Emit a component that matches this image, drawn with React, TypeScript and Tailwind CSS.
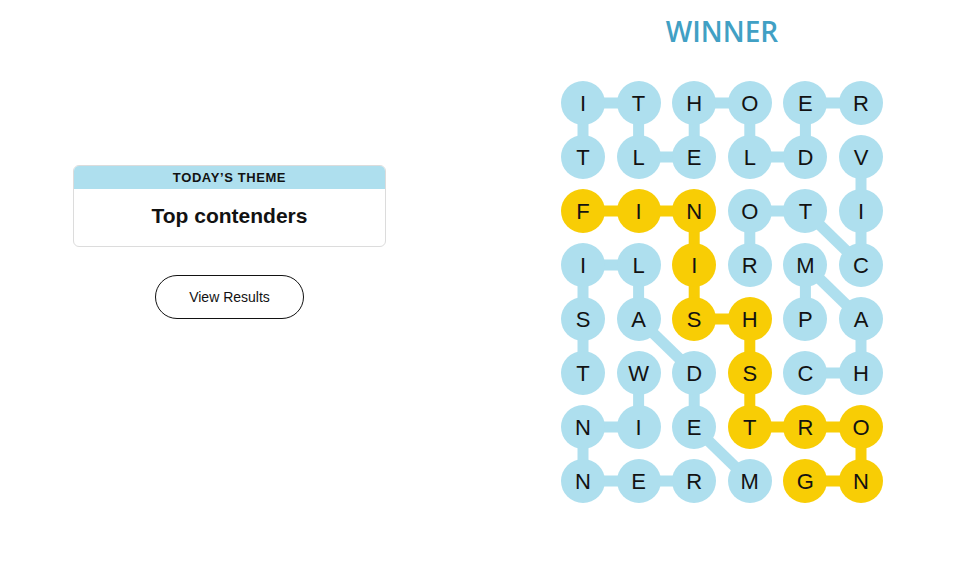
import React from 'react';

const GRID = [
  'ITHOER',
  'TLELDV',
  'FINOTI',
  'ILIRMC',
  'SASHPA',
  'TWDSCH',
  'NIETRO',
  'NERMGN',
];

// cells that belong to the spangram
const GOLD = new Set([
  '2,0', '2,1', '2,2', '3,2', '4,2', '4,3', '5,3', '6,3', '6,4', '6,5', '7,5', '7,4',
]);

type Link = [number, number, number, number, boolean?];

const LINKS: Link[] = [
  // TITLEHOLDER
  [1, 0, 0, 0], [0, 0, 0, 1], [0, 1, 1, 1], [1, 1, 1, 2], [1, 2, 0, 2], [0, 2, 0, 3],
  [0, 3, 1, 3], [1, 3, 1, 4], [1, 4, 0, 4], [0, 4, 0, 5],
  // VICTOR
  [1, 5, 2, 5], [2, 5, 3, 5], [3, 5, 2, 4], [2, 4, 2, 3], [2, 3, 3, 3],
  // CHAMP
  [5, 4, 5, 5], [5, 5, 4, 5], [4, 5, 3, 4], [3, 4, 4, 4],
  // MEDALIST
  [7, 3, 6, 2], [6, 2, 5, 2], [5, 2, 4, 1], [4, 1, 3, 1], [3, 1, 3, 0], [3, 0, 4, 0], [4, 0, 5, 0],
  // WINNER
  [5, 1, 6, 1], [6, 1, 6, 0], [6, 0, 7, 0], [7, 0, 7, 1], [7, 1, 7, 2],
  // FINISHSTRONG
  [2, 0, 2, 1, true], [2, 1, 2, 2, true], [2, 2, 3, 2, true], [3, 2, 4, 2, true],
  [4, 2, 4, 3, true], [4, 3, 5, 3, true], [5, 3, 6, 3, true], [6, 3, 6, 4, true],
  [6, 4, 6, 5, true], [6, 5, 7, 5, true], [7, 5, 7, 4, true],
];

const D = 44;
const PX = 55.6;
const PY = 54;
const cx = (c: number) => D / 2 + c * PX;
const cy = (r: number) => D / 2 + r * PY;

const Board: React.FC = () => (
  <div className="relative w-[322px] h-[422px]">
    <svg className="absolute inset-0" width={322} height={422} viewBox="0 0 322 422">
      {LINKS.map(([r1, c1, r2, c2, gold], i) => (
        <line
          key={i}
          x1={cx(c1)}
          y1={cy(r1)}
          x2={cx(c2)}
          y2={cy(r2)}
          stroke={gold ? '#f8cd05' : '#aedfee'}
          strokeWidth={11}
        />
      ))}
    </svg>
    <div className="relative grid grid-cols-[repeat(6,44px)] gap-x-[11.6px] gap-y-[10px]">
      {GRID.map((row, r) =>
        row.split('').map((ch, c) => (
          <div
            key={`${r}-${c}`}
            className={`w-[44px] h-[44px] rounded-full flex items-center justify-center text-[22px] text-[#121212] ${
              GOLD.has(`${r},${c}`) ? 'bg-[#f8cd05]' : 'bg-[#aedfee]'
            }`}
          >
            {ch}
          </div>
        ))
      )}
    </div>
  </div>
);

export default function App() {
  return (
    <div className="flex w-full h-[573px] bg-white text-[#121212] font-['Liberation_Sans',Arial,sans-serif]">
      <div className="ml-[73px] w-[313px] pt-[165px] flex flex-col items-center">
        <div className="w-full rounded-[6px] border border-[#dcdcdc] overflow-hidden">
          <div className="h-[23px] bg-[#aedfee] flex items-center justify-center text-[13px] font-semibold tracking-[0.6px] uppercase">
            Today’s Theme
          </div>
          <div className="h-[57px] pb-[4px] flex items-center justify-center text-[21px] font-bold">
            Top contenders
          </div>
        </div>
        <button className="mt-[28px] w-[149px] h-[44px] rounded-full border border-[#121212] text-[14px] bg-white">
          View Results
        </button>
      </div>
      <div className="ml-[175px] flex flex-col items-center">
        <h1 className="pt-[12px] h-[81px] text-[28px] leading-[38px] font-semibold text-[#41a0c4] font-['Open_Sans',sans-serif]">
          WINNER
        </h1>
        <Board />
      </div>
    </div>
  );
}
